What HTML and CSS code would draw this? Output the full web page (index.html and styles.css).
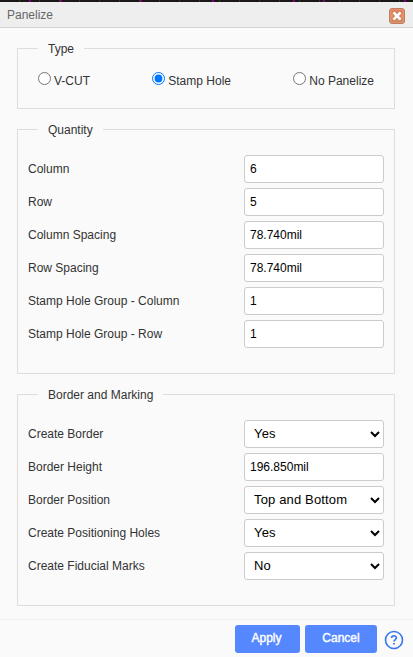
FILE: index.html
```html
<!DOCTYPE html>
<html lang="en">
<head>
<meta charset="utf-8">
<title>Panelize</title>
<link rel="stylesheet" href="styles.css">
</head>
<body>
<div class="canvas-strip"></div>
<header class="titlebar">
  <span>Panelize</span>
  <svg class="close" viewBox="0 0 16 16" width="16" height="16">
    <defs><linearGradient id="g" x1="0" y1="0" x2="0" y2="1"><stop offset="0" stop-color="#de8160"/><stop offset=".5" stop-color="#ed8b62"/><stop offset="1" stop-color="#c28c62"/></linearGradient></defs>
    <rect x=".5" y=".5" width="15" height="15" rx="2.5" fill="url(#g)" stroke="#c47a61"/>
    <rect x="1.5" y="1.5" width="13" height="13" rx="1.5" fill="none" stroke="#e8a27f" stroke-opacity=".5"/>
    <path d="M5.3 5.3l5.4 5.4M10.7 5.3l-5.4 5.4" stroke="#cb7350" stroke-width="4" stroke-linecap="square"/>
    <path d="M5.3 5.3l5.4 5.4M10.7 5.3l-5.4 5.4" stroke="#fff" stroke-width="2.7" stroke-linecap="square"/>
  </svg>
</header>
<main class="content">
  <fieldset class="type">
    <legend>Type</legend>
    <div class="radios">
      <label><input type="radio" name="type"><span>V-CUT</span></label>
      <label><input type="radio" name="type" checked><span>Stamp Hole</span></label>
      <label><input type="radio" name="type"><span>No Panelize</span></label>
    </div>
  </fieldset>
  <fieldset class="quantity">
    <legend>Quantity</legend>
    <div class="rows">
      <label class="row"><span>Column</span><input type="text" value="6"></label>
      <label class="row"><span>Row</span><input type="text" value="5"></label>
      <label class="row"><span>Column Spacing</span><input type="text" value="78.740mil"></label>
      <label class="row"><span>Row Spacing</span><input type="text" value="78.740mil"></label>
      <label class="row"><span>Stamp Hole Group - Column</span><input type="text" value="1"></label>
      <label class="row"><span>Stamp Hole Group - Row</span><input type="text" value="1"></label>
    </div>
  </fieldset>
  <fieldset class="border">
    <legend>Border and Marking</legend>
    <div class="rows">
      <label class="row"><span>Create Border</span><select><option>Yes</option><option>No</option></select></label>
      <label class="row"><span>Border Height</span><input type="text" value="196.850mil"></label>
      <label class="row"><span>Border Position</span><select><option>Top and Bottom</option></select></label>
      <label class="row"><span>Create Positioning Holes</span><select><option>Yes</option><option>No</option></select></label>
      <label class="row"><span>Create Fiducial Marks</span><select><option>No</option><option>Yes</option></select></label>
    </div>
  </fieldset>
</main>
<footer class="footer">
  <button class="apply">Apply</button>
  <button class="cancel">Cancel</button>
  <svg class="help" viewBox="0 0 20 20" width="20" height="20" fill="none" stroke="#3577ec">
    <circle cx="10" cy="10" r="8.5" stroke-width="1.6"/>
    <path d="M7.6 8.1C7.6 5 12.4 5.1 12.4 7.8C12.4 9.6 10 9.5 10 11.6" stroke-width="1.6"/>
    <path d="M10 12.9v1.7" stroke-width="1.8"/>
  </svg>
</footer>
</body>
</html>
```

FILE: styles.css
```css
* { box-sizing: border-box; }
body {
  margin: 0;
  height: 657px;
  overflow: hidden;
  display: flex;
  flex-direction: column;
  background: #fafafa;
  color: #333;
  font: 12px/15px "Liberation Sans", Arial, sans-serif;
}
.canvas-strip {
  height: 2px;
  flex: none;
  background:
    linear-gradient(#800080, #800080) 29px 0 / 2px 2px no-repeat,
    linear-gradient(#800080, #800080) 60px 0 / 2px 2px no-repeat,
    linear-gradient(#800080, #800080) 140px 0 / 2px 2px no-repeat,
    linear-gradient(#800080, #800080) 212px 0 / 2px 2px no-repeat,
    linear-gradient(#800080, #800080) 293px 0 / 2px 2px no-repeat,
    linear-gradient(#800080, #800080) 323px 0 / 2px 2px no-repeat,
    linear-gradient(#800080, #800080) 404px 0 / 2px 2px no-repeat,
    repeating-linear-gradient(90deg, #1b1717 0 19px, #383333 19px 20px);
}
.titlebar {
  height: 26px;
  flex: none;
  display: flex;
  justify-content: space-between;
  align-items: center;
  padding: 1px 8px 0 7px;
  background: #eee;
  border-bottom: 1px solid #d3d3d3;
  color: #666;
}
.close { margin-top: 1px; }
.content { padding: 13px 18px 0 17px; flex: none; }
fieldset {
  margin: 0 0 13px;
  padding: 0 10px;
  border: 1px solid #ddd;
  min-width: 0;
}
legend { margin-left: 10px; padding: 1px 10px 0; line-height: 14px; }
.type { height: 68px; }
.quantity { height: 252px; }
.border { height: 219px; }
.radios {
  display: flex;
  justify-content: space-between;
  padding: 16px 10px 0;
}
.radios label { display: flex; }
.radios input { width: 13px; height: 13px; margin: 0 3px 0 0; }
.radios span { padding-top: 2px; }
.rows { display: grid; gap: 5px; padding-top: 18px; }
.row { display: flex; align-items: center; justify-content: space-between; }
.row input, .row select {
  width: 140px;
  height: 28px;
  border: 1px solid #ccc;
  border-radius: 3px;
  background: #fff;
  color: #000;
  font: 12px "Liberation Sans", Arial, sans-serif;
}
.row input { padding: 0 5px; }
.row select { padding: 0 1px 1px 5px; font-size: 13px; letter-spacing: .15px; }
.footer {
  flex: 1;
  display: flex;
  align-items: flex-start;
  border-top: 1px solid #eee;
  padding: 5px 9px 0 0;
  justify-content: flex-end;
}
button {
  height: 28px;
  padding: 0 0 2px;
  margin-right: 5px;
  border: 0;
  border-radius: 3px;
  background: #5588ff;
  color: #fff;
  font: 12px "Liberation Sans", Arial, sans-serif;
  -webkit-text-stroke: .4px #fff;
}
.apply { width: 65px; padding-right: 2px; }
.cancel { width: 72px; }
.help { margin: 5px 0 0 2px; }
```
